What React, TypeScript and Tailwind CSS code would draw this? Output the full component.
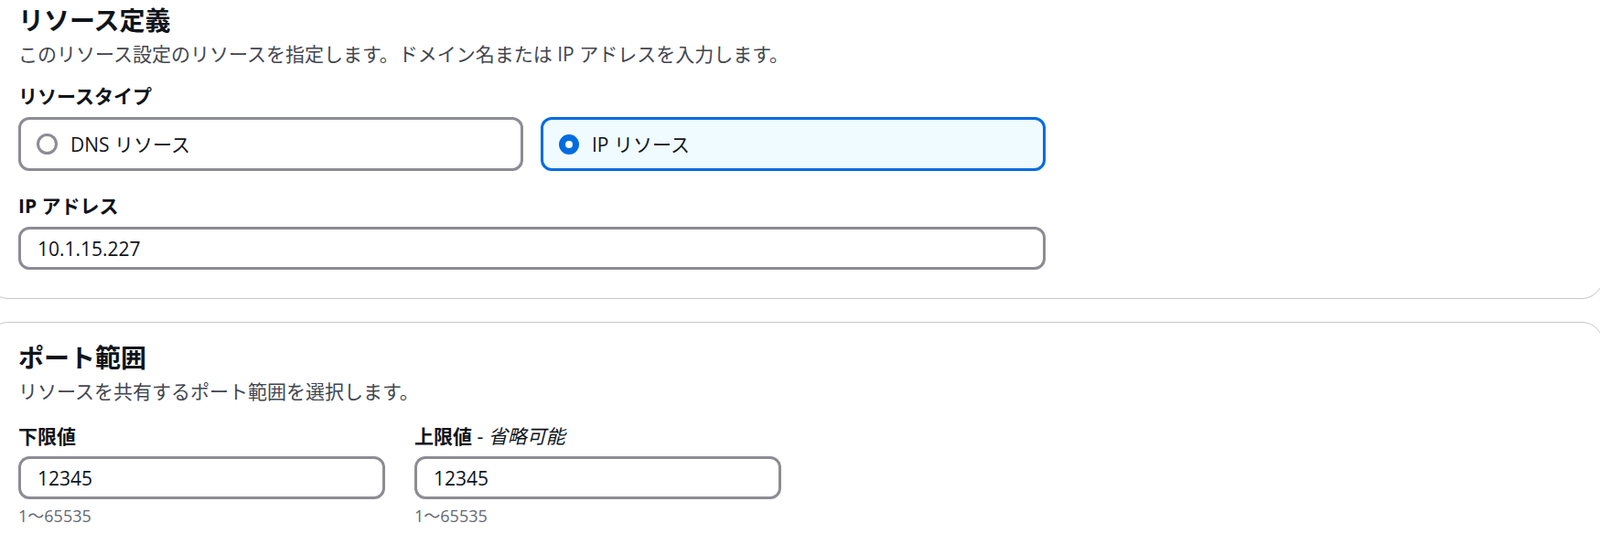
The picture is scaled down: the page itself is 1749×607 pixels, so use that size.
import React from 'react';

type RadioProps = { checked: boolean };

const RadioMark: React.FC<RadioProps> = ({ checked }) =>
  checked ? (
    <svg width="22" height="22" viewBox="0 0 22 22" className="shrink-0">
      <circle cx="11" cy="11" r="7.5" fill="#ffffff" stroke="#006ce0" strokeWidth="7" />
    </svg>
  ) : (
    <svg width="23" height="23" viewBox="0 0 23 23" className="shrink-0">
      <circle cx="11.5" cy="11.5" r="10" fill="#ffffff" stroke="#8c8c94" strokeWidth="3" />
    </svg>
  );

const Tile: React.FC<{ label: string; checked?: boolean }> = ({ label, checked = false }) => (
  <div
    className={`flex h-[59px] items-center gap-[14px] rounded-[12px] border-[3px] px-[17px] ${
      checked ? 'border-[#006ce0] bg-[#f0fbff]' : 'border-[#8c8c94] bg-white'
    }`}
  >
    <RadioMark checked={checked} />
    <span className="text-[21px] leading-[30px]">{label}</span>
  </div>
);

const TextInput: React.FC<{ value: string }> = ({ value }) => (
  <input
    readOnly
    value={value}
    className="block h-[47px] w-full rounded-[12px] border-[3px] border-[#8c8c94] bg-white px-[18px] text-[21px] text-[#0f141a] outline-none"
  />
);

export default function App() {
  return (
    <div className="h-screen overflow-hidden bg-white text-[#0f141a] [font-family:'Open_Sans','Noto_Sans_CJK_JP',sans-serif]">
      <div className="-ml-[15px] w-[1768px]">
        {/* リソース定義 */}
        <section className="-mt-[17px] rounded-[24px] border border-[#c6c6cd] pb-[31px] pl-[34px] pt-[22px]">
          <h2 className="text-[28px] font-bold leading-[33px]">リソース定義</h2>
          <p className="mt-[5px] text-[21px] leading-[30px] text-[#424650]">
            このリソース設定のリソースを指定します。ドメイン名または IP アドレスを入力します。
          </p>

          <div className="mt-[16px] w-[1123px]">
            <div className="text-[21px] font-bold leading-[30px]">リソースタイプ</div>
            <div className="mt-[8px] grid grid-cols-2 gap-[19px]">
              <Tile label="DNS リソース" />
              <Tile label="IP リソース" checked />
            </div>
          </div>

          <div className="mt-[23px] w-[1123px]">
            <div className="text-[21px] font-bold leading-[30px]">IP アドレス</div>
            <div className="mt-[8px]">
              <TextInput value="10.1.15.227" />
            </div>
          </div>
        </section>

        {/* ポート範囲 */}
        <section className="mt-[25px] rounded-[24px] border border-[#c6c6cd] pb-[90px] pl-[34px] pt-[22px]">
          <h2 className="text-[28px] font-bold leading-[33px]">ポート範囲</h2>
          <p className="mt-[5px] text-[21px] leading-[30px] text-[#424650]">
            リソースを共有するポート範囲を選択します。
          </p>

          <div className="mt-[19px] flex gap-[32px]">
            <div className="w-[401px]">
              <div className="text-[21px] font-bold leading-[30px]">下限値</div>
              <div className="mt-[7px]">
                <TextInput value="12345" />
              </div>
              <div className="mt-[6px] text-[18px] leading-[24px] text-[#656871]">1～65535</div>
            </div>
            <div className="w-[401px]">
              <div className="text-[21px] leading-[30px]">
                <span className="font-bold">上限値</span> - <i>省略可能</i>
              </div>
              <div className="mt-[7px]">
                <TextInput value="12345" />
              </div>
              <div className="mt-[6px] text-[18px] leading-[24px] text-[#656871]">1～65535</div>
            </div>
          </div>
        </section>
      </div>
    </div>
  );
}
